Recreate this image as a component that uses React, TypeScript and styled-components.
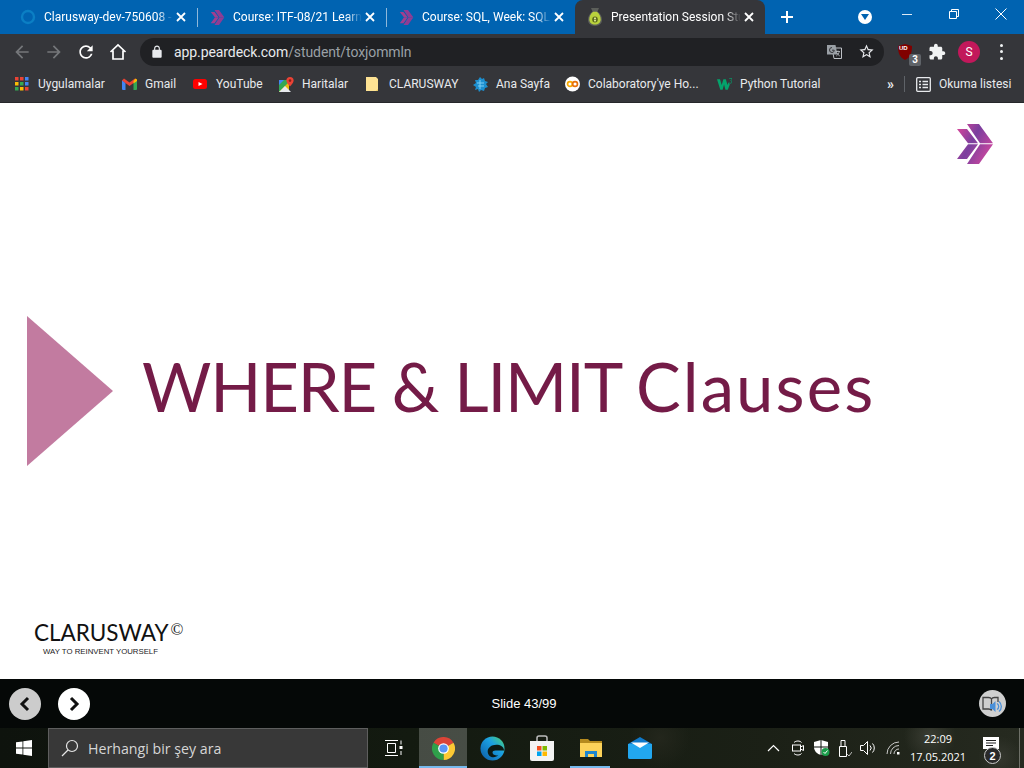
import styled, { createGlobalStyle } from 'styled-components'
import type { ReactNode } from 'react'

const Global = createGlobalStyle`
  html, body { margin: 0; padding: 0; background: #fff; }
  body { width: 1024px; height: 768px; overflow: hidden; font-family: Roboto, "Liberation Sans", sans-serif; }
`

const BLUE = '#0063b1'
const CHROME = '#35363a'

function Material({ d, size = 24, color = '#fff' }: { d: string; size?: number; color?: string }) {
  return (
    <svg width={size} height={size} viewBox="0 0 24 24" fill={color}>
      <path d={d} />
    </svg>
  )
}

function ChevronMark({ size = 16 }: { size?: number }) {
  return (
    <svg width={size * 0.9} height={size} viewBox="0 0 36 40">
      <defs>
        <linearGradient id="mark" x1="0" y1="0" x2="1" y2="0.6">
          <stop offset="0" stopColor="#e0479a" />
          <stop offset="0.5" stopColor="#7a3f9e" />
          <stop offset="1" stopColor="#c9479f" />
        </linearGradient>
      </defs>
      <path d="M0 5h10l11 14.200H11zM11 20.200h10L10 35H0zM10 0h12l14 19.200H23zM23 20.200h13L22 40H10z" fill="url(#mark)" />
    </svg>
  )
}

function TabChevron() {
  return (
    <svg width="15" height="15" viewBox="0 0 36 40">
      <path d="M0 5h10l11 14.200H11zM11 20.200h10L10 35H0z" fill="#a03f90" />
      <path d="M10 0h12l14 19.200H23zM23 20.200h13L22 40H10z" fill="#8f3d94" />
    </svg>
  )
}

function TabCircle() {
  return (
    <svg width="16" height="16" viewBox="0 0 16 16">
      <circle cx="8" cy="8" r="6" fill="none" stroke="#0b7fc4" strokeWidth="2.400" />
    </svg>
  )
}

function PearBag() {
  return (
    <svg width="16" height="20" viewBox="0 0 16 20">
      <path d="M4 1h8l-1.500 3.500c3 2 4.500 5 4.500 8.300 0 4-3 6.200-7 6.200s-7-2.200-7-6.200c0-3.300 1.500-6.300 4.500-8.300z" fill="#5c5f5a" />
      <path d="M6.200 4.800h3.600c2.600 2 3.900 4.600 3.900 7.600 0 3-2.400 5.100-5.700 5.100s-5.700-2.100-5.700-5.100c0-3 1.300-5.600 3.900-7.600z" fill="#b9d23c" />
      <ellipse cx="8" cy="12.500" rx="2.800" ry="3" fill="#5d6b1d" />
      <path d="M7 11h2v1H7zM7 13h2v1H7zM7.600 10h.8v5h-.8z" fill="#d9e58c" />
    </svg>
  )
}

const tabs: { title: string; icon: ReactNode; active?: boolean }[] = [
  { title: 'Clarusway-dev-750608 -', icon: <TabCircle /> },
  { title: 'Course: ITF-08/21 Learn', icon: <TabChevron /> },
  { title: 'Course: SQL, Week: SQL', icon: <TabChevron /> },
  { title: 'Presentation Session Stu', icon: <PearBag />, active: true },
]

const bookmarks: { label: string; w: number; icon: ReactNode }[] = [
  {
    label: 'Uygulamalar',
    w: 107,
    icon: (
      <svg width="14" height="14" viewBox="0 0 14 14">
        {[0, 5, 10].flatMap((y, r) =>
          [0, 5, 10].map((x, c) => (
            <rect key={`${r}${c}`} x={x} y={y} width="3.500" height="3.500" fill={[['#ea4335', '#ea4335', '#4285f4'], ['#fbbc05', '#34a853', '#4285f4'], ['#34a853', '#fbbc05', '#ea4335']][r][c]} />
          )),
        )}
      </svg>
    ),
  },
  {
    label: 'Gmail',
    w: 71,
    icon: (
      <svg width="15" height="12" viewBox="0 0 15 12">
        <path d="M0 2v9a1 1 0 001 1h2.500V5z" fill="#4285f4" />
        <path d="M15 2v9a1 1 0 01-1 1h-2.500V5z" fill="#34a853" />
        <path d="M0 2.500L7.500 8 15 2.500 13 .5 7.500 4.500 2 .5z" fill="#ea4335" />
        <path d="M11.500 3v2.500L15 3V1.500L13.500 .5z" fill="#fbbc05" />
      </svg>
    ),
  },
  {
    label: 'YouTube',
    w: 86,
    icon: (
      <svg width="14" height="10" viewBox="0 0 14 10">
        <rect width="14" height="10" rx="2.500" fill="#f00" />
        <path d="M5.500 3l4 2-4 2z" fill="#fff" />
      </svg>
    ),
  },
  {
    label: 'Haritalar',
    w: 87,
    icon: (
      <svg width="15" height="15" viewBox="0 0 15 15">
        <path d="M0 3h10v12H0z" fill="#34a853" />
        <path d="M0 15L10 5v10z" fill="#fbbc05" opacity=".9" />
        <path d="M0 3h5L0 8z" fill="#4285f4" />
        <path d="M0 15l6-6 6 6z" fill="#e8eaed" />
        <path d="M11 0a3.600 3.600 0 013.600 3.600C14.600 6 11 9.500 11 9.500S7.400 6 7.400 3.600A3.600 3.600 0 0111 0z" fill="#ea4335" />
        <circle cx="11" cy="3.600" r="1.300" fill="#8c1d18" />
      </svg>
    ),
  },
  {
    label: 'CLARUSWAY',
    w: 107,
    icon: (
      <svg width="12" height="14" viewBox="0 0 12 14">
        <path d="M0 0h10l2 2v12H0z" fill="#fde293" />
        <path d="M10 14l2-2v2z" fill="#e6c55a" />
      </svg>
    ),
  },
  {
    label: 'Ana Sayfa',
    w: 92,
    icon: (
      <svg width="15" height="15" viewBox="0 0 15 15" fill="#1d8fcf">
        <path d="M7 0l2 2 2-1 1 3 3 1-2 2 2 3-3 1-1 3-3-1-2 2-1-3-3 1 1-3-3-2 3-2-1-3 3 0z" />
        <path d="M4 6h7M5 9h6M7 3v9" stroke="#7fd0f5" strokeWidth="1" />
      </svg>
    ),
  },
  {
    label: "Colaboratory'ye Ho...",
    w: 152,
    icon: (
      <svg width="16" height="16" viewBox="0 0 16 16">
        <circle cx="8" cy="8" r="8" fill="#fff" />
        <circle cx="5.300" cy="8" r="2.600" fill="none" stroke="#f9ab00" strokeWidth="1.800" />
        <circle cx="10.700" cy="8" r="2.600" fill="none" stroke="#e8710a" strokeWidth="1.800" />
      </svg>
    ),
  },
  {
    label: 'Python Tutorial',
    w: 162,
    icon: (
      <svg width="16" height="12" viewBox="0 0 16 12">
        <path d="M0 1h3.200l1.800 6 1.800-6h2.600l1.800 6 1-3 1.500 2.500L11.500 12H9L7.500 6.500 6 12H3.500z" fill="#04a36c" />
        <path d="M13 0h3v1l-1.300 1.400c.8.200 1.300.7 1.300 1.400 0 .8-.8 1.400-1.700 1.400-.6 0-1.100-.2-1.400-.5" fill="none" stroke="#04a36c" strokeWidth=".8" />
      </svg>
    ),
  },
]

export default function App() {
  return (
    <Screen>
      <Global />
      <TabStrip>
        {tabs.map((tab, i) => (
          <Tab key={tab.title} $active={tab.active} $divider={i < 3}>
            <Favicon>{tab.icon}</Favicon>
            <TabTitle>{tab.title}</TabTitle>
            <TabClose>
              <svg width="10" height="10" viewBox="0 0 10 10" stroke="#fff" strokeWidth="1.800">
                <path d="M1 1l8 8M9 1L1 9" />
              </svg>
            </TabClose>
          </Tab>
        ))}
        <NewTab>
          <svg width="14" height="14" viewBox="0 0 14 14" stroke="#fff" strokeWidth="2">
            <path d="M7 1v12M1 7h12" />
          </svg>
        </NewTab>
        <SearchTabs>
          <svg width="8" height="6" viewBox="0 0 8 6" fill={BLUE}>
            <path d="M0 0h8L4 6z" />
          </svg>
        </SearchTabs>
        <WindowButtons>
          <WindowButton>
            <svg width="10" height="10" viewBox="0 0 10 10" stroke="#dce9f5">
              <path d="M0 5.500h10" />
            </svg>
          </WindowButton>
          <WindowButton>
            <svg width="10" height="10" viewBox="0 0 10 10" fill="none" stroke="#fff">
              <path d="M.5 2.500h7v7h-7zM2.500 2.500v-2h7v7h-2" />
            </svg>
          </WindowButton>
          <WindowButton>
            <svg width="12" height="12" viewBox="0 0 12 12" stroke="#fff">
              <path d="M.5 .5l11 11M11.500 .5l-11 11" />
            </svg>
          </WindowButton>
        </WindowButtons>
      </TabStrip>

      <Toolbar>
        <NavButton>
          <Material size={20} color="#75777a" d="M20 11H7.830l5.590-5.590L12 4l-8 8 8 8 1.410-1.410L7.830 13H20v-2z" />
        </NavButton>
        <NavButton>
          <Material size={20} color="#75777a" d="M12 4l-1.410 1.410L16.170 11H4v2h12.170l-5.580 5.590L12 20l8-8z" />
        </NavButton>
        <NavButton>
          <Material size={20} d="M17.650 6.350A7.958 7.958 0 0012 4c-4.420 0-7.990 3.580-7.990 8s3.570 8 7.990 8c3.730 0 6.840-2.550 7.730-6h-2.080A5.990 5.990 0 0112 18c-3.310 0-6-2.690-6-6s2.690-6 6-6c1.660 0 3.140.690 4.220 1.780L13 11h7V4l-2.350 2.350z" />
        </NavButton>
        <NavButton>
          <svg width="18" height="18" viewBox="0 0 18 18" fill="none" stroke="#fff" strokeWidth="1.700">
            <path d="M1.500 9L9 2l7.500 7M4 7.500V16h10V7.500" />
          </svg>
        </NavButton>
        <Omnibox>
          <LockSlot>
            <Material size={14} color="#e8eaed" d="M18 8h-1V6c0-2.760-2.240-5-5-5S7 3.240 7 6v2H6c-1.100 0-2 .9-2 2v10c0 1.100.9 2 2 2h12c1.100 0 2-.9 2-2V10c0-1.100-.9-2-2-2zM9 6c0-1.660 1.340-3 3-3s3 1.340 3 3v2H9V6z" />
          </LockSlot>
          <Url>
            app.peardeck.com<UrlPath>/student/toxjommln</UrlPath>
          </Url>
          <OmniIcons>
            <svg width="15" height="14" viewBox="0 0 15 14">
              <path d="M5 3h9.500v10.500H7z" fill="none" stroke="#bdc1c6" />
              <path d="M0 0h8.500l2 9.500H0z" fill="#9aa0a6" />
              <path d="M5 2.500a2.500 2.500 0 100 5c1.500 0 2.200-1 2.200-2.300H5" fill="none" stroke="#35363a" />
              <path d="M9 6.500h4M11 5.500v1M12.300 6.500c-.4 2-1.500 3.500-3 4.500M10 8c.5 1.200 1.500 2.200 2.800 3" fill="none" stroke="#bdc1c6" strokeWidth=".8" />
            </svg>
            <Material size={17} color="#e8eaed" d="M22 9.240l-7.190-.62L12 2 9.190 8.630 2 9.240l5.460 4.730L5.820 21 12 17.270 18.180 21l-1.630-7.030L22 9.240zM12 15.400l-3.760 2.270 1-4.280-3.320-2.880 4.380-.38L12 6.100l1.710 4.040 4.380.38-3.320 2.880 1 4.280L12 15.400z" />
          </OmniIcons>
        </Omnibox>
        <ToolActions>
          <Ublock>
            <svg width="14" height="16" viewBox="0 0 14 16">
              <path d="M7 0l7 2c0 6-1 11-7 14C1 13 0 8 0 2z" fill="#800000" />
            </svg>
            <UblockMark>UD</UblockMark>
            <Badge>3</Badge>
          </Ublock>
          <ActionSlot>
            <Material size={18} color="#f1f3f4" d="M20.500 11H19V7c0-1.100-.9-2-2-2h-4V3.500C13 2.120 11.880 1 10.500 1S8 2.120 8 3.500V5H4c-1.100 0-1.990.9-1.990 2v3.800H3.500c1.490 0 2.700 1.210 2.700 2.700s-1.210 2.700-2.700 2.700H2V20c0 1.100.9 2 2 2h3.800v-1.500c0-1.490 1.210-2.700 2.700-2.700 1.490 0 2.700 1.210 2.700 2.700V22H17c1.100 0 2-.9 2-2v-4h1.500c1.380 0 2.500-1.120 2.500-2.500S21.880 11 20.500 11z" />
          </ActionSlot>
          <ActionSlot>
            <Avatar>S</Avatar>
          </ActionSlot>
          <ActionSlot>
            <Dots>
              <i />
              <i />
              <i />
            </Dots>
          </ActionSlot>
        </ToolActions>
      </Toolbar>

      <BookmarkBar>
        {bookmarks.map((b) => (
          <Bookmark key={b.label} $w={b.w}>
            <BookmarkIcon>{b.icon}</BookmarkIcon>
            {b.label}
          </Bookmark>
        ))}
        <More>»</More>
        <BarDivider />
        <ReadingList>
          <svg width="15" height="15" viewBox="0 0 15 15" fill="none" stroke="#e8eaed" strokeWidth="1.300">
            <rect x=".7" y=".7" width="13.600" height="13.600" rx="1" />
            <path d="M3 4.500h2M6.500 4.500H12M3 7.500h2M6.500 7.500H12M3 10.500h2M6.500 10.500H12" />
          </svg>
          Okuma listesi
        </ReadingList>
      </BookmarkBar>

      <Slide>
        <SlideTop>
          <ChevronMark size={40} />
        </SlideTop>
        <Hero>
          <Triangle />
          <HeroTitle>
            WHERE &amp; LIMIT <HeroLower>Clauses</HeroLower>
          </HeroTitle>
        </Hero>
        <Brand>
          <BrandName>
            CLARUSWAY<BrandCopy>©</BrandCopy>
          </BrandName>
          <BrandTag>WAY TO REINVENT YOURSELF</BrandTag>
        </Brand>
      </Slide>

      <SlideBar>
        <RoundButton $dim>
          <svg width="14" height="16" viewBox="0 0 14 16" fill="none" stroke="#111" strokeWidth="3">
            <path d="M10 2L4 8l6 6" />
          </svg>
        </RoundButton>
        <RoundButton>
          <svg width="14" height="16" viewBox="0 0 14 16" fill="none" stroke="#111" strokeWidth="3">
            <path d="M4 2l6 6-6 6" />
          </svg>
        </RoundButton>
        <SlideCount>Slide 43/99</SlideCount>
        <ReaderButton>
          <svg width="22" height="18" viewBox="0 0 22 18" fill="none">
            <path d="M1 2.500h5.500c1.500 0 2.500.5 3 1.500v11.500c-.5-1-1.500-1.500-3-1.500H1zM9.500 4c.5-1 1.500-1.500 3-1.500H16V7" stroke="#444" strokeWidth="1.300" />
            <path d="M8 9h2.500L13.500 6v11l-3-3H8z" fill="#4a90d9" />
            <path d="M15 8.500a3.500 3.500 0 010 6M17 6.500a6.500 6.500 0 010 10" stroke="#4a90d9" strokeWidth="1.300" />
          </svg>
        </ReaderButton>
      </SlideBar>

      <Taskbar>
        <StartButton>
          <svg width="16" height="16" viewBox="0 0 16 16" fill="#fff">
            <path d="M0 2.300l6.500-.9v6.200H0zM7.300 1.300L16 0v7.600H7.300zM0 8.400h6.500v6.200L0 13.700zM7.300 8.400H16V16l-8.700-1.300z" />
          </svg>
        </StartButton>
        <SearchBox>
          <svg width="18" height="18" viewBox="0 0 18 18" fill="none" stroke="#e6e6e6" strokeWidth="1.200">
            <circle cx="11" cy="7" r="5.500" />
            <path d="M7 11l-6 6" />
          </svg>
          Herhangi bir şey ara
        </SearchBox>
        <TaskApp $w={51}>
          <svg width="18" height="16" viewBox="0 0 18 16" fill="none" stroke="#fff">
            <path d="M0 .5h13M0 15.500h13M2.500 3.500h8v9h-8zM16 .5v4M16 11v4" />
            <rect x="14.500" y="6" width="3" height="3" fill="#fff" stroke="none" />
          </svg>
        </TaskApp>
        <TaskApp $w={48} $running="full" $focused>
          <svg width="23" height="23" viewBox="0 0 24 24">
            <path d="M12 12L1.600 6A12 12 0 0122.400 6z" fill="#db4437" />
            <path d="M12 12L22.400 6A12 12 0 0112 24z" fill="#fcc934" />
            <path d="M12 12L12 24A12 12 0 011.600 6z" fill="#2fa04a" />
            <circle cx="12" cy="12" r="5.600" fill="#fff" />
            <circle cx="12" cy="12" r="4.300" fill="#5a95f5" />
          </svg>
        </TaskApp>
        <TaskApp $w={50}>
          <svg width="25" height="25" viewBox="0 0 26 26">
            <defs>
              <linearGradient id="edge" x1="0" y1="1" x2="1" y2="0">
                <stop offset="0" stopColor="#0c59a4" />
                <stop offset=".6" stopColor="#1ba0e2" />
                <stop offset="1" stopColor="#4fd66c" />
              </linearGradient>
            </defs>
            <circle cx="13" cy="13" r="12.500" fill="url(#edge)" />
            <path d="M25 15c0-4-4-6-8-6-5 0-9 3-9 7 0 3 2 6 6 6 2 0 4-1 5-2-4 1-6-1-6-3 0-1 1-2 3-2h9z" fill="#0d1a14" />
          </svg>
        </TaskApp>
        <TaskApp $w={49}>
          <svg width="24" height="26" viewBox="0 0 24 26">
            <path d="M7 6V3a2 2 0 012-2h6a2 2 0 012 2v3" fill="none" stroke="#bdbdbd" strokeWidth="1.500" />
            <path d="M0 6h24v18a2 2 0 01-2 2H2a2 2 0 01-2-2z" fill="#f3f3f3" />
            <path d="M7 11h4.500v4.500H7z" fill="#f25022" />
            <path d="M12.500 11H17v4.500h-4.500z" fill="#7fba00" />
            <path d="M7 16.500h4.500V21H7z" fill="#00a4ef" />
            <path d="M12.500 16.500H17V21h-4.500z" fill="#ffb900" />
          </svg>
        </TaskApp>
        <TaskApp $w={49} $running="inset">
          <svg width="22" height="18" viewBox="0 0 22 18">
            <path d="M0 0h8l2 2h12v16H0z" fill="#b58a1e" />
            <path d="M0 4h22v14H0z" fill="#fcd25a" />
            <path d="M5 12h12v6h-3v-3H8v3H5z" fill="#1e86d0" />
          </svg>
        </TaskApp>
        <TaskApp $w={49}>
          <svg width="24" height="22" viewBox="0 0 24 22">
            <path d="M12 0l12 7v13a2 2 0 01-2 2H2a2 2 0 01-2-2V7z" fill="#0f78c8" />
            <path d="M0 7h24v13a2 2 0 01-2 2H2a2 2 0 01-2-2z" fill="#22a7ef" />
            <path d="M3 5.500h18L12 11z" fill="#fff" />
          </svg>
        </TaskApp>
        <Tray>
          <TrayIcon $w={24}>
            <svg width="13" height="8" viewBox="0 0 13 8" fill="none" stroke="#fff" strokeWidth="1.200">
              <path d="M1 7l5.500-5.500L12 7" />
            </svg>
          </TrayIcon>
          <TrayIcon $w={25}>
            <svg width="12" height="16" viewBox="0 0 12 16" fill="none" stroke="#fff">
              <rect x=".5" y="5" width="8" height="6" />
              <path d="M8.500 7l3-1.500v5l-3-1.500M2 2.500C4 .5 8 .5 9.500 2.500M2 13.500c2 2 6 2 7.500 0" />
            </svg>
          </TrayIcon>
          <TrayIcon $w={23}>
            <svg width="16" height="16" viewBox="0 0 16 16">
              <path d="M7 0l7 2v5c0 4-3 7-7 8-4-1-7-4-7-8V2z" fill="#fff" />
              <path d="M7 0v15M0 7h14" stroke="#0d120c" />
              <circle cx="11.500" cy="12" r="4" fill="#1b9e4b" />
              <path d="M9.500 12l1.500 1.500 2.500-3" fill="none" stroke="#fff" />
            </svg>
          </TrayIcon>
          <TrayIcon $w={23}>
            <svg width="14" height="17" viewBox="0 0 14 17" fill="none" stroke="#fff">
              <path d="M1.500 6.500h7v10h-7zM3 6.500v-6h4v6" />
              <path d="M9 14l2 2 3-4" strokeWidth=".7" />
            </svg>
          </TrayIcon>
          <TrayIcon $w={24}>
            <svg width="16" height="14" viewBox="0 0 16 14" fill="none" stroke="#fff">
              <path d="M.5 4.500h3l4-4v13l-4-4h-3zM10 4.500a3.500 3.500 0 010 5M12.500 2.500a6.500 6.500 0 010 9" />
            </svg>
          </TrayIcon>
          <TrayIcon $w={26}>
            <svg width="14" height="14" viewBox="0 0 14 14" fill="none" stroke="#ddd" strokeWidth=".9">
              <path d="M1 13A12 12 0 0113 1M4.500 13A8.500 8.500 0 0113 4.500M8 13A5 5 0 0113 8" />
              <rect x="11" y="11" width="2.500" height="2.500" fill="#fff" stroke="none" />
            </svg>
          </TrayIcon>
          <Clock>
            <span>22:09</span>
            <span>17.05.2021</span>
          </Clock>
          <Notify>
            <svg width="17" height="16" viewBox="0 0 17 16">
              <path d="M0 0h16v12H8l-4 4v-4H0z" fill="#fff" />
              <path d="M3 3.500h10M3 6h10M3 8.500h7" stroke="#222" />
            </svg>
            <NotifyCount>2</NotifyCount>
          </Notify>
        </Tray>
      </Taskbar>
    </Screen>
  )
}

const Screen = styled.div`
  width: 1024px;
  height: 768px;
  display: flex;
  flex-direction: column;
  overflow: hidden;
`

const TabStrip = styled.div`
  height: 34px;
  flex: none;
  display: flex;
  align-items: stretch;
  padding-left: 8px;
  background: ${BLUE};
`

const Tab = styled.div<{ $active?: boolean; $divider?: boolean }>`
  position: relative;
  width: ${({ $active }) => ($active ? 190 : 189)}px;
  flex: none;
  box-sizing: border-box;
  display: flex;
  align-items: center;
  padding: 0 8px 0 12px;
  color: #fff;
  font-size: 12px;
  background: ${({ $active }) => ($active ? CHROME : 'transparent')};
  border-radius: ${({ $active }) => ($active ? '8px 8px 0 0' : '0')};

  &::after {
    content: '';
    display: ${({ $divider }) => ($divider ? 'block' : 'none')};
    position: absolute;
    right: -1px;
    top: 8px;
    height: 19px;
    width: 1px;
    background: #8fb8da;
  }

  &:nth-child(3)::after {
    display: none;
  }
`

const Favicon = styled.span`
  width: 16px;
  flex: none;
  display: flex;
  justify-content: center;
  margin-right: 8px;
`

const TabTitle = styled.span`
  flex: 1;
  min-width: 0;
  white-space: nowrap;
  -webkit-mask-image: linear-gradient(to right, #000 88%, transparent 100%);
  mask-image: linear-gradient(to right, #000 88%, transparent 100%);
`

const TabClose = styled.span`
  width: 16px;
  flex: none;
  display: flex;
  justify-content: center;
`

const NewTab = styled.span`
  width: 44px;
  flex: none;
  display: flex;
  align-items: center;
  justify-content: center;
`

const SearchTabs = styled.span`
  width: 14px;
  height: 14px;
  margin: 10px 0 0 49px;
  flex: none;
  display: flex;
  align-items: center;
  justify-content: center;
  border-radius: 50%;
  background: #fff;
`

const WindowButtons = styled.div`
  margin-left: auto;
  display: flex;
  padding-right: 0;
`

const WindowButton = styled.span`
  width: 47px;
  height: 28px;
  display: flex;
  align-items: center;
  justify-content: center;
`

const Toolbar = styled.div`
  height: 35px;
  flex: none;
  box-sizing: border-box;
  display: flex;
  align-items: center;
  padding-left: 6px;
  background: ${CHROME};
`

const NavButton = styled.span`
  width: 32px;
  flex: none;
  display: flex;
  justify-content: center;
`

const Omnibox = styled.div`
  width: 744px;
  height: 28px;
  margin-left: 6px;
  flex: none;
  display: flex;
  align-items: center;
  border-radius: 14px;
  background: #202124;
`

const LockSlot = styled.span`
  width: 34px;
  display: flex;
  justify-content: center;
`

const Url = styled.span`
  color: #e8eaed;
  font-size: 14px;
  letter-spacing: -0.09px;
`

const UrlPath = styled.span`
  color: #9aa0a6;
`

const OmniIcons = styled.div`
  margin-left: auto;
  width: 48px;
  padding-right: 9px;
  display: flex;
  align-items: center;
  justify-content: space-between;
`

const ToolActions = styled.div`
  display: flex;
  align-items: center;
  padding-left: 5px;
`

const ActionSlot = styled.span`
  width: 32px;
  display: flex;
  justify-content: center;
  align-items: center;
`

const Ublock = styled(ActionSlot)`
  position: relative;
  height: 24px;
`

const UblockMark = styled.span`
  position: absolute;
  left: 10px;
  top: 5px;
  color: #fff;
  font: 700 6px "Liberation Sans", sans-serif;
`

const Badge = styled.span`
  position: absolute;
  right: 0;
  bottom: -2px;
  width: 12px;
  height: 12px;
  display: flex;
  align-items: center;
  justify-content: center;
  border-radius: 2px;
  background: #5f6368;
  color: #fff;
  font: 700 10px "Liberation Sans", sans-serif;
`

const Avatar = styled.span`
  width: 22px;
  height: 22px;
  display: flex;
  align-items: center;
  justify-content: center;
  border-radius: 50%;
  background: #c2185b;
  color: #fff;
  font-size: 12px;
`

const Dots = styled.span`
  display: flex;
  flex-direction: column;
  gap: 3.5px;

  i {
    display: block;
    width: 3px;
    height: 3px;
    border-radius: 50%;
    background: #f1f3f4;
  }
`

const BookmarkBar = styled.div`
  height: 34px;
  flex: none;
  box-sizing: border-box;
  display: flex;
  align-items: center;
  padding: 0 0 3px 15px;
  background: ${CHROME};
  border-bottom: 1px solid #26272a;
  color: #e8eaed;
  font-size: 12px;
`

const Bookmark = styled.span<{ $w: number }>`
  width: ${({ $w }) => $w}px;
  flex: none;
  display: flex;
  align-items: center;
  white-space: nowrap;
`

const BookmarkIcon = styled.span`
  width: 15px;
  margin-right: 8px;
  flex: none;
  display: flex;
`

const More = styled.span`
  margin-left: 8px;
  width: 14px;
  flex: none;
  color: #e8eaed;
  font-size: 14px;
  font-weight: 700;
`

const BarDivider = styled.span`
  width: 1px;
  height: 16px;
  margin-left: 3px;
  flex: none;
  background: #5f6368;
`

const ReadingList = styled.span`
  margin-left: 11px;
  display: flex;
  align-items: center;
  gap: 8px;
  white-space: nowrap;
`

const Slide = styled.main`
  height: 576px;
  flex: none;
  box-sizing: border-box;
  padding-top: 21px;
  background: #fff;
`

const SlideTop = styled.div`
  height: 40px;
  display: flex;
  justify-content: flex-end;
  padding-right: 31px;
`

const Hero = styled.div`
  margin-top: 152px;
  height: 150px;
  display: flex;
  align-items: center;
  padding-left: 27px;
`

const Triangle = styled.div`
  width: 0;
  height: 0;
  flex: none;
  border-style: solid;
  border-width: 75px 0 75px 86px;
  border-color: transparent transparent transparent #c27ba0;
`

const HeroTitle = styled.h1`
  margin: 0 0 10px 29px;
  color: #741b47;
  font: 400 67px Lato, sans-serif;
  letter-spacing: -1.2px;
  white-space: nowrap;
`

const HeroLower = styled.span`
  letter-spacing: 2.1px;
`

const Brand = styled.div`
  margin-top: 155px;
  padding-left: 34px;
`

const BrandName = styled.div`
  color: #111;
  font: 400 22.500px/24px Lato, sans-serif;
`

const BrandCopy = styled.sup`
  font: 400 17px/1 "Liberation Serif", serif;
  vertical-align: 6px;
  margin-left: 2px;
`

const BrandTag = styled.div`
  margin: 2px 0 0 9px;
  color: #222;
  font: 400 7.800px/10px "Liberation Sans", sans-serif;
`

const SlideBar = styled.div`
  height: 49px;
  flex: none;
  box-sizing: border-box;
  position: relative;
  display: flex;
  align-items: center;
  gap: 17px;
  padding: 0 18px 0 9px;
  background: #050807;
`

const RoundButton = styled.span<{ $dim?: boolean }>`
  width: 32px;
  height: 32px;
  flex: none;
  display: flex;
  align-items: center;
  justify-content: center;
  border-radius: 50%;
  background: ${({ $dim }) => ($dim ? '#cccccc' : '#fff')};
`

const SlideCount = styled.span`
  position: absolute;
  left: 0;
  right: 0;
  padding-left: 24px;
  text-align: center;
  color: #fff;
  font: 400 13px "Liberation Sans", sans-serif;
`

const ReaderButton = styled.span`
  width: 27px;
  height: 27px;
  margin-left: auto;
  flex: none;
  display: flex;
  align-items: center;
  justify-content: center;
  border-radius: 50%;
  background: #cfcfcf;
`

const Taskbar = styled.div`
  height: 40px;
  flex: 1;
  display: flex;
  align-items: stretch;
  color: #fff;
  background:
    radial-gradient(circle 26px at 930px 8px, #3a3d33 0, transparent 100%),
    radial-gradient(circle 22px at 1000px 30px, #34372e 0, transparent 100%),
    radial-gradient(circle 30px at 660px 10px, #23261c 0, transparent 100%),
    linear-gradient(90deg, #0e130d, #131a10 40%, #1b2016 75%, #262a20);
`

const StartButton = styled.span`
  width: 48px;
  flex: none;
  display: flex;
  align-items: center;
  justify-content: center;
`

const SearchBox = styled.div`
  width: 320px;
  flex: none;
  box-sizing: border-box;
  display: flex;
  align-items: center;
  gap: 9px;
  padding-left: 12px;
  background: #383838;
  border: 1px solid #5e5e5e;
  color: #d6d6d6;
  font: 400 14.200px "Open Sans", sans-serif;
`

const TaskApp = styled.span<{ $w: number; $running?: 'full' | 'inset'; $focused?: boolean }>`
  position: relative;
  width: ${({ $w }) => $w}px;
  flex: none;
  display: flex;
  align-items: center;
  justify-content: center;
  background: ${({ $focused }) => ($focused ? 'rgba(255,255,255,.22)' : 'transparent')};

  &::after {
    content: '';
    display: ${({ $running }) => ($running ? 'block' : 'none')};
    position: absolute;
    bottom: 0;
    left: ${({ $running }) => ($running === 'inset' ? 4 : 0)}px;
    right: ${({ $running }) => ($running === 'inset' ? 5 : 0)}px;
    height: 2px;
    background: #76b9ed;
  }
`

const Tray = styled.div`
  margin-left: auto;
  display: flex;
  align-items: stretch;
`

const TrayIcon = styled.span<{ $w: number }>`
  width: ${({ $w }) => $w}px;
  flex: none;
  display: flex;
  align-items: center;
  justify-content: center;
`

const Clock = styled.div`
  width: 64px;
  flex: none;
  display: flex;
  flex-direction: column;
  align-items: center;
  justify-content: center;
  gap: 2px;
  font: 400 11px/16px "Open Sans", sans-serif;
  white-space: nowrap;
`

const Notify = styled.div`
  position: relative;
  width: 50px;
  margin-right: 4px;
  flex: none;
  box-sizing: border-box;
  display: flex;
  align-items: center;
  padding: 0 0 6px 13px;
  border-right: 1px solid #6e7068;
`

const NotifyCount = styled.span`
  position: absolute;
  right: 18px;
  bottom: 4px;
  width: 15px;
  height: 15px;
  display: flex;
  align-items: center;
  justify-content: center;
  border-radius: 50%;
  border: 1px solid #ccc;
  background: #2a2a2a;
  color: #fff;
  font: 700 11px "Liberation Sans", sans-serif;
`
